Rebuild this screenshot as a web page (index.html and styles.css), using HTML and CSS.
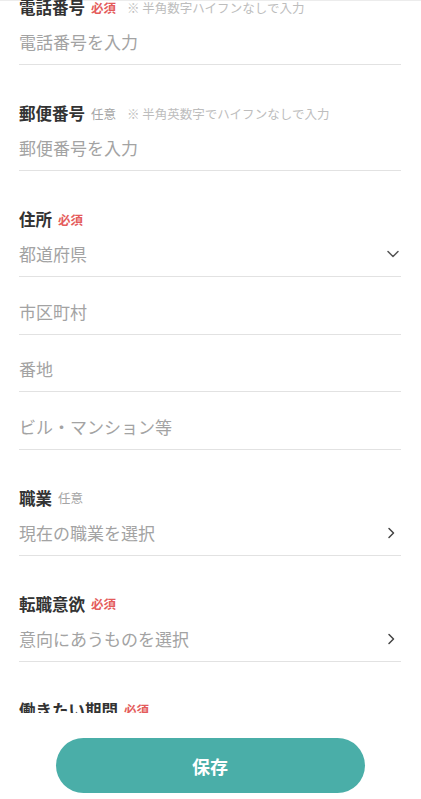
FILE: index.html
```html
<!DOCTYPE html>
<html lang="ja">
<head>
    <meta charset="UTF-8">
    <meta name="viewport" content="width=device-width, initial-scale=1.0">
    <title>プロフィール編集</title>
    <link rel="stylesheet" href="styles.css">
</head>
<body>
    <div class="topline"></div>
    <form class="form">
        <div class="field">
            <div class="label">電話番号 <span class="tag req">必須</span><span class="note">※ 半角数字ハイフンなしで入力</span></div>
            <div class="row"><span class="ph">電話番号を入力</span></div>
        </div>

        <div class="field">
            <div class="label">郵便番号 <span class="tag opt">任意</span><span class="note">※ 半角英数字でハイフンなしで入力</span></div>
            <div class="row"><span class="ph">郵便番号を入力</span></div>
        </div>

        <div class="field">
            <div class="label">住所 <span class="tag req">必須</span></div>
            <div class="row">
                <span class="ph">都道府県</span>
                <svg class="chev-down" width="12" height="8" viewBox="0 0 12 8"><path d="M1 1.5l5 5 5-5" fill="none" stroke="#555" stroke-width="1.5" stroke-linecap="round" stroke-linejoin="round"/></svg>
            </div>
            <div class="row"><span class="ph">市区町村</span></div>
            <div class="row"><span class="ph">番地</span></div>
            <div class="row"><span class="ph">ビル・マンション等</span></div>
        </div>

        <div class="field">
            <div class="label">職業 <span class="tag opt">任意</span></div>
            <div class="row">
                <span class="ph">現在の職業を選択</span>
                <svg class="chev-right" width="8" height="12" viewBox="0 0 8 12"><path d="M2 1.5l4.5 4.5-4.5 4.5" fill="none" stroke="#444" stroke-width="1.5" stroke-linecap="round" stroke-linejoin="round"/></svg>
            </div>
        </div>

        <div class="field">
            <div class="label">転職意欲 <span class="tag req">必須</span></div>
            <div class="row">
                <span class="ph">意向にあうものを選択</span>
                <svg class="chev-right" width="8" height="12" viewBox="0 0 8 12"><path d="M2 1.5l4.5 4.5-4.5 4.5" fill="none" stroke="#444" stroke-width="1.5" stroke-linecap="round" stroke-linejoin="round"/></svg>
            </div>
        </div>

        <div class="field">
            <div class="label">働きたい期間 <span class="tag req">必須</span></div>
            <div class="row">
                <span class="ph">期間を選択</span>
            </div>
        </div>
    </form>

    <div class="footer">
        <button type="button" class="save">保存</button>
    </div>
</body>
</html>
```

FILE: styles.css
```css
* {
    box-sizing: border-box;
    font-family: "Noto Sans CJK JP", "Noto Sans", sans-serif;
}

body {
    margin: 0;
    background: #fff;
    color: #333;
}

.topline {
    height: 1px;
    background: #ececec;
}

.form {
    margin-top: -5px;
    padding: 0 20px 120px 19px;
}

.field {
    margin-bottom: 37px;
}

.label {
    display: flex;
    align-items: center;
    height: 22px;
    font-size: 16.5px;
    font-weight: 700;
    line-height: 22px;
    color: #333;
}

.tag {
    font-size: 12.5px;
    font-weight: 700;
    line-height: 1;
    margin-left: 6px;
    margin-top: 2px;
}

.req {
    color: #e45b5b;
}

.opt {
    color: #a5a5a5;
    font-weight: 400;
}

.note {
    font-size: 12.5px;
    font-weight: 400;
    line-height: 1;
    color: #bdbdbd;
    margin-left: 11px;
    margin-top: 2px;
}

.row {
    display: flex;
    align-items: center;
    justify-content: space-between;
    padding: 12px 0 10px;
    border-bottom: 1px solid #e2e2e2;
}

.row + .row {
    padding-top: 22.5px;
}

.ph {
    font-size: 17px;
    line-height: 24px;
    color: #a3a3a3;
}

.chev-down {
    margin-right: 2px;
}

.chev-right {
    margin-right: 6px;
}

.footer {
    position: fixed;
    left: 0;
    right: 0;
    bottom: 0;
    height: 86px;
    background: #fff;
    display: flex;
    justify-content: center;
    padding-top: 25px;
}

.save {
    width: 309px;
    height: 55px;
    border: none;
    border-radius: 28px;
    background: #4aaea8;
    color: #fff;
    font-size: 18px;
    font-weight: 700;
    margin-left: -1px;
}
```
